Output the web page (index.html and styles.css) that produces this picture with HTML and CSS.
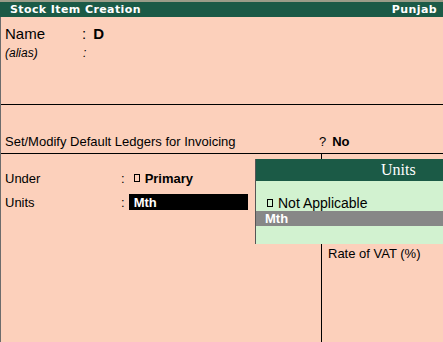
FILE: index.html
```html
<!DOCTYPE html>
<html lang="en">
<head>
    <meta charset="UTF-8">
    <meta name="viewport" content="width=device-width, initial-scale=1.0">
    <title>Stock Item Creation</title>
    <link rel="stylesheet" href="styles.css">
</head>
<body>
    <div class="screen">
        <div class="topline"></div>
        <div class="titlebar">
            <span>Stock Item Creation</span>
            <span class="company">Punjab</span>
        </div>

        <div class="form">
            <div class="name-block">
                <div class="row name-row">
                    <span class="label">Name</span>
                    <span class="colon">:</span>
                    <b class="value">D</b>
                </div>
                <div class="row alias-row">
                    <span class="label">(alias)</span>
                    <span class="colon">:</span>
                </div>
            </div>

            <div class="ledger-block">
                <div class="row">
                    <span class="ledger-label">Set/Modify Default Ledgers for Invoicing</span>
                    <span class="q">?</span>
                    <b>No</b>
                </div>
            </div>

            <div class="lower">
                <div class="left-col">
                    <div class="row field">
                        <span class="flabel">Under</span>
                        <span class="colon">:</span>
                        <span class="fvalue"><i class="box"></i><b>Primary</b></span>
                    </div>
                    <div class="row field units">
                        <span class="flabel">Units</span>
                        <span class="colon">:</span>
                        <span class="fvalue active"><b>Mth</b></span>
                    </div>
                </div>
                <div class="right-col">
                    <div class="row">Rate of VAT (%)</div>
                </div>
            </div>
        </div>

        <!-- popup list -->
        <div class="popup">
            <div class="popup-head">Units</div>
            <div class="popup-body">
                <div class="item"><i class="box"></i>Not Applicable</div>
                <div class="item selected"><b>Mth</b></div>
            </div>
        </div>
    </div>
</body>
</html>
```

FILE: styles.css
```css
* { margin: 0; padding: 0; box-sizing: border-box; }
body {
    font-family: "Liberation Sans", Arial, sans-serif;
    font-size: 13px;
    color: #000;
    background: #fcd0bb;
}
.screen {
    position: relative;
    width: 443px;
    height: 342px;
    overflow: hidden;
    background: #fcd0bb;
}
.topline { height: 2px; background: #9a9c88; }
.titlebar {
    height: 15px;
    display: flex;
    padding: 0 6px 0 10px;
    background: #1b5a46;
    color: #fff;
    font-family: "DejaVu Sans", sans-serif;
    font-weight: bold;
    font-size: 11px;
    letter-spacing: 0.4px;
    line-height: 15px;
    white-space: nowrap;
}
.company { margin-left: auto; }

.form {
    height: 325px;
    border-left: 1px solid #6c6c6c;
}
.row { display: flex; align-items: center; white-space: nowrap; }

.name-block {
    height: 88px;
    padding: 8px 0 0 4px;
    border-bottom: 1px solid #000;
}
.name-row { height: 16px; font-size: 15px; }
.name-row .label { width: 77px; }
.name-row .value { margin-left: 7px; }
.alias-row { height: 12px; margin-top: 6px; font-size: 12px; font-style: italic; }
.alias-row .label { width: 78px; }

.ledger-block {
    height: 49px;
    padding: 28px 0 0 4px;
    border-bottom: 1px solid #000;
}
.ledger-block .row { height: 16px; }
.ledger-label { width: 314px; }
.q { margin-right: 6px; }

.lower { display: flex; height: 188px; }
.left-col { width: 320px; padding: 16px 0 0 4px; }
.right-col {
    flex: 1;
    border-left: 1px solid #000;
    padding: 91px 0 0 6px;
}
.right-col .row { height: 16px; }
.field { height: 16px; }
.units { margin-top: 8px; }
.flabel { width: 116px; }
.fvalue { margin-left: 4px; display: flex; align-items: center; }
.fvalue.active {
    width: 119px;
    height: 16px;
    padding-left: 5px;
    background: #000;
    color: #fff;
}
.box {
    display: inline-block;
    width: 6px;
    height: 8px;
    border: 1px solid #000;
    margin: 0 5px 0 5px;
}

.popup {
    position: absolute;
    left: 255px;
    top: 159px;
    width: 200px;
    border-left: 1px solid #555;
}
.popup-head {
    height: 22px;
    padding-left: 125px;
    background: #1b5a46;
    color: #fff;
    font-family: "Liberation Serif", serif;
    font-size: 16px;
    line-height: 22px;
}
.popup-body {
    height: 63px;
    padding-top: 14px;
    background: #d2f2d0;
}
.item {
    height: 16px;
    display: flex;
    align-items: center;
    padding-left: 6px;
    font-size: 14px;
}
.item.selected {
    height: 15px;
    padding-left: 9px;
    background: #878787;
    color: #fff;
    font-size: 13px;
}
```
